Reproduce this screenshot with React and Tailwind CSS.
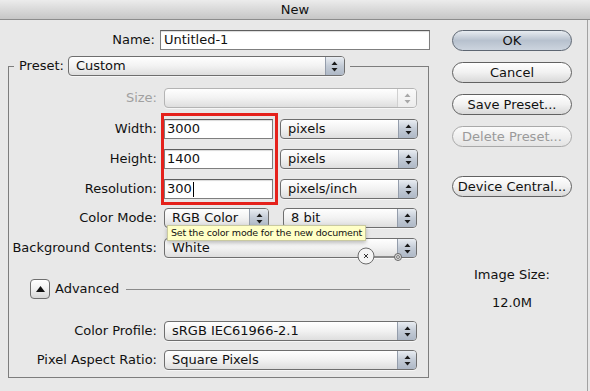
import React from "react";

function Arrows({ disabled }) {
  const c = disabled ? "#a8a8a8" : "#1a1a1a";
  return (
    <svg width="7" height="11" viewBox="0 0 7 11">
      <path d="M3.5 0.5 L6.5 4 L0.5 4 Z" fill={c} />
      <path d="M3.5 10.5 L6.5 7 L0.5 7 Z" fill={c} />
    </svg>
  );
}

function Select({ w, value, disabled }) {
  return (
    <div
      className={`flex h-[20px] items-stretch overflow-hidden rounded-[4px] border ${
        disabled ? "border-[#b4b4b4]" : "border-[#6e6e6e]"
      } bg-gradient-to-b from-white via-[#f2f2f2] to-[#dedede] shadow-[0_1px_0_rgba(255,255,255,0.6)]`}
      style={{ width: w }}
    >
      <span className="flex-1 truncate pl-[7px] text-[13px] leading-[18px] text-[#111]">{value}</span>
      <span
        className={`flex w-[19px] items-center justify-center border-l ${
          disabled
            ? "border-[#d0d0d0] bg-gradient-to-b from-[#fafafa] to-[#ececec]"
            : "border-[#949dab] bg-gradient-to-b from-[#e9edf2] via-[#c3cbd6] to-[#aeb8c6]"
        }`}
      >
        <Arrows disabled={disabled} />
      </span>
    </div>
  );
}

function Field({ value, caret }) {
  return (
    <div className="flex h-[20px] w-[109px] items-center border border-[#7f7f7f] border-t-[#5e5e5e] bg-white pl-[2px] text-[13px] text-[#111] shadow-[inset_0_1px_1px_rgba(0,0,0,0.15)]">
      {value}
      {caret && <span className="ml-[1px] inline-block h-[15px] w-[1px] bg-black" />}
    </div>
  );
}

function Button({ children, primary, disabled }) {
  return (
    <div
      className={`flex h-[21px] w-[120px] items-center justify-center rounded-full border text-[13px] ${
        primary
          ? "border-[#5d6672] bg-gradient-to-b from-[#e8ecf1] via-[#b7c1ce] to-[#ccd4de] text-[#111]"
          : disabled
          ? "border-[#a9a9a9] bg-gradient-to-b from-[#fbfbfb] via-[#f0f0f0] to-[#e4e4e4] text-[#9a9a9a]"
          : "border-[#616161] bg-gradient-to-b from-white via-[#f1f1f1] to-[#d9d9d9] text-[#111]"
      }`}
    >
      {children}
    </div>
  );
}

function Row({ label, dim, children, className = "" }) {
  return (
    <div className={`flex h-[20px] items-center ${className}`}>
      <span className={`w-[148px] text-right text-[13px] whitespace-nowrap ${dim ? "text-[#a0a0a0]" : "text-[#111]"}`}>
        {label}
      </span>
      <div className="ml-[7px] flex items-center">{children}</div>
    </div>
  );
}

export default function App() {
  return (
    <div className="h-[391px] w-[590px] overflow-hidden bg-[#e8e8e8] font-['DejaVu_Sans',sans-serif] text-[#111]">
      <div className="flex h-[20px] items-center justify-center border-b border-[#8c8c8c] bg-gradient-to-b from-[#ececec] to-[#c6c6c6] text-[13px]">
        New
      </div>
      <div className="flex h-[371px] w-[588px] border-r border-[#a2a2a2]">
        {/* left side */}
        <div className="w-[440px] pl-[8px] pt-[10px]">
          <div className="flex h-[20px] items-center">
            <span className="w-[147px] text-right text-[13px]">Name:</span>
            <div className="ml-[5px] flex h-[20px] w-[270px] items-center border border-[#7f7f7f] border-t-[#5e5e5e] bg-white pl-[3px] text-[13px] shadow-[inset_0_1px_1px_rgba(0,0,0,0.15)]">
              Untitled-1
            </div>
          </div>

          <div className="relative mt-[16px] h-[312px] w-[421px] border border-[#7d7d7d] pb-[9px]">
            <div className="-mt-[11px] ml-[5px] flex w-fit items-center bg-[#e8e8e8] px-[5px]">
              <span className="text-[13px]">Preset:</span>
              <div className="ml-[4px]">
                <Select w={277} value="Custom" />
              </div>
            </div>

            <Row label="Size:" dim className="mt-[12px]">
              <Select w={253} value="" disabled />
            </Row>
            <Row label="Width:" className="mt-[11px]">
              <Field value="3000" />
              <div className="ml-[7px]"><Select w={138} value="pixels" /></div>
            </Row>
            <Row label="Height:" className="mt-[10px]">
              <Field value="1400" />
              <div className="ml-[7px]"><Select w={138} value="pixels" /></div>
            </Row>
            <Row label="Resolution:" className="mt-[10px]">
              <Field value="300" caret />
              <div className="ml-[7px]"><Select w={138} value="pixels/inch" /></div>
            </Row>
            <Row label="Color Mode:" className="mt-[9px]">
              <Select w={105} value="RGB Color" />
              <div className="ml-[14px]"><Select w={134} value="8 bit" /></div>
            </Row>
            <Row label="Background Contents:" className="mt-[10px]">
              <Select w={253} value="White" />
            </Row>

            <div className="mt-[21px] flex h-[20px] items-center">
              <div className="ml-[21px] flex h-[20px] w-[20px] items-center justify-center rounded-[4px] border border-[#6e6e6e] bg-gradient-to-b from-white via-[#f0f0f0] to-[#d6d6d6]">
                <svg width="9" height="6" viewBox="0 0 9 6"><path d="M4.5 0 L9 6 L0 6 Z" fill="#111" /></svg>
              </div>
              <span className="ml-[5px] text-[13px]">Advanced</span>
              <div className="ml-[7px] mr-[18px] h-px flex-1 bg-[#8a8a8a]" />
            </div>

            <Row label="Color Profile:" className="mt-[22px]">
              <Select w={253} value="sRGB IEC61966-2.1" />
            </Row>
            <Row label="Pixel Aspect Ratio:" className="mt-[9px]">
              <Select w={253} value="Square Pixels" />
            </Row>

            {/* red annotation box */}
            <div className="absolute left-[152px] top-[46px] h-[92px] w-[117px] border-[3px] border-[#e5211b]" />

            {/* tooltip */}
            <div className="absolute left-[158px] top-[158px] h-[16px] w-fit border border-[#c9c9a0] bg-[#ffffc6] px-[3px] text-[9.5px] leading-[14px] tracking-[-0.2px] text-[#111] shadow-[0_2px_4px_rgba(0,0,0,0.25)] whitespace-nowrap">
              Set the color mode for the new document
            </div>

            {/* cursor artifact */}
            <svg className="absolute left-[348px] top-[179px]" width="46" height="20" viewBox="0 0 46 20">
              <line x1="16" y1="11" x2="38" y2="11" stroke="#8a8a8a" strokeWidth="2" />
              <circle cx="9" cy="10" r="8" fill="#f4f4f4" stroke="#6a6a6a" strokeWidth="1" />
              <path d="M7 8 L11 12 M11 8 L7 12" stroke="#333" strokeWidth="1" />
              <circle cx="41" cy="11" r="3.5" fill="#ddd" stroke="#666" strokeWidth="1" />
              <circle cx="41" cy="11" r="1.5" fill="none" stroke="#666" strokeWidth="0.8" />
            </svg>
          </div>
        </div>

        {/* right side */}
        <div className="flex w-[132px] flex-col pl-[12px] pt-[10px]">
          <Button primary>OK</Button>
          <div className="mt-[11px]"><Button>Cancel</Button></div>
          <div className="mt-[11px]"><Button>Save Preset...</Button></div>
          <div className="mt-[11px]"><Button disabled>Delete Preset...</Button></div>
          <div className="mt-[29px]"><Button>Device Central...</Button></div>
          <div className="mt-[68px] flex flex-col items-center text-[13px]">
            <span>Image Size:</span>
            <span className="mt-[8px]">12.0M</span>
          </div>
        </div>
      </div>
    </div>
  );
}
